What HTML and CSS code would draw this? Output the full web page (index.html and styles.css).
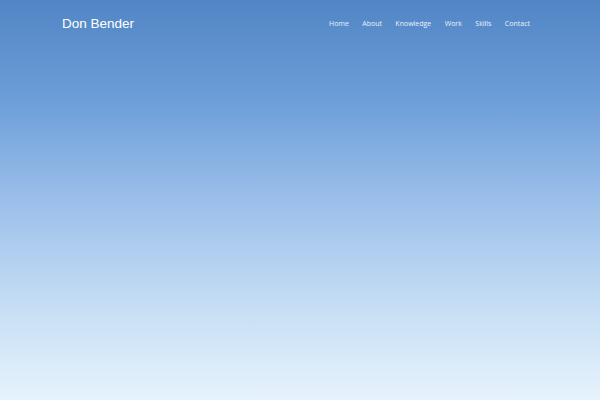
FILE: index.html
```html
<!DOCTYPE html>
<html>
<head>
<meta charset="utf-8">
<link rel="stylesheet" href="styles.css">
</head>
<body>
<div class="page">
  <header class="header">
    <a class="logo" href="#">Don Bender</a>
    <nav class="nav">
      <a href="#">Home</a>
      <a href="#">About</a>
      <a href="#">Knowledge</a>
      <a href="#">Work</a>
      <a href="#">Skills</a>
      <a href="#">Contact</a>
    </nav>
  </header>
</div>
</body>
</html>
```
FILE: styles.css
```css
html, body {
  margin: 0;
  padding: 0;
  height: 100%;
}
body {
  background: linear-gradient(to bottom, #5185c4 0%, #6c9ed8 25%, #9bbfea 50%, #c3dcf4 75%, #e7f3fc 100%);
  font-family: "Liberation Sans", Arial, sans-serif;
}
.page {
  height: 100%;
}
.header {
  display: flex;
  align-items: center;
  justify-content: space-between;
  padding: 15px 70px 0 62px;
  height: 18px;
}
.logo {
  color: #ffffff;
  font-size: 13.5px;
  text-decoration: none;
  line-height: 18px;
}
.nav {
  display: flex;
  gap: 13.4px;
}
.nav a {
  color: #eaf2fb;
  font-family: "Open Sans", sans-serif;
  font-size: 7px;
  text-decoration: none;
  line-height: 18px;
}
```
